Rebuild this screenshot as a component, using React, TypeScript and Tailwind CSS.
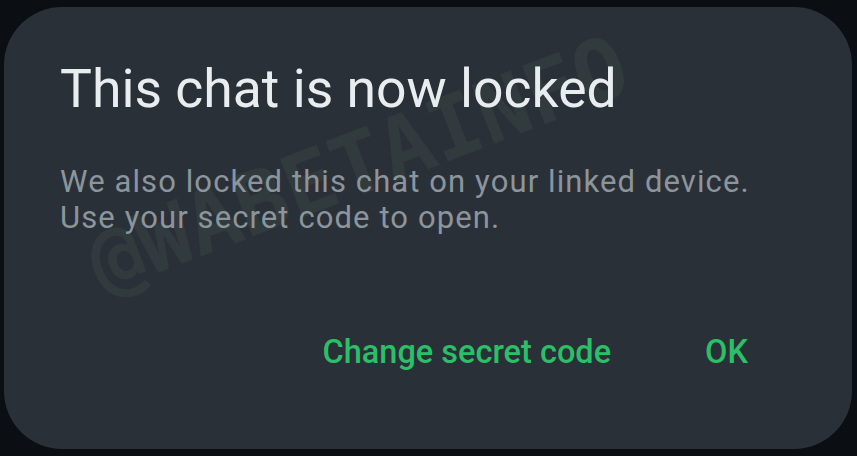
export default function App() {
  return (
    <div className="w-[857px] h-[456px] bg-[#0b0f14] pt-[7px] pb-[7px] pl-[4px] pr-[5px] font-['Roboto',sans-serif]">
      <div className="relative h-full rounded-[58px] bg-[#2a3038] overflow-hidden flex flex-col px-[56px] pt-[50px]">
        {/* watermark */}
        <div className="absolute left-[88px] top-[215px] -rotate-[21deg] origin-left text-[86px] leading-[88px] font-bold text-[#4f6a55]/20 pointer-events-none select-none whitespace-nowrap font-['DejaVu_Sans_Mono',monospace]">
          @WABETAINFO
        </div>

        <h1 className="relative text-[53.5px] leading-[64px] text-[#e9edef] font-normal">
          This chat is now locked
        </h1>
        <p className="relative mt-[43px] text-[31px] leading-[36px] tracking-[1.1px] text-[#8c959c]">
          We also locked this chat on your linked device.
          <br />
          Use your secret code to open.
        </p>
        <div className="relative mt-auto mb-[77px] flex justify-end gap-[94px] pr-[48px] text-[32.5px] leading-[40px] font-medium text-[#2bbf67]">
          <span>Change secret code</span>
          <span>OK</span>
        </div>
      </div>
    </div>
  )
}
